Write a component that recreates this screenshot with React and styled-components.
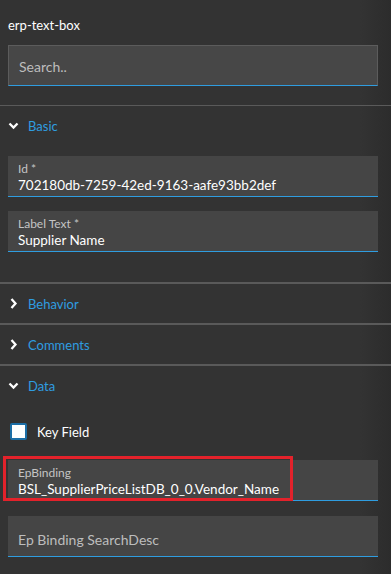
import React from "react";
import styled, { createGlobalStyle } from "styled-components";

const GlobalStyle = createGlobalStyle`
  html, body {
    margin: 0;
    padding: 0;
    background: #333333;
  }
  body {
    font-family: Lato, "Open Sans", sans-serif;
    color: #f2f2f2;
  }
`;

const Panel = styled.div`
  width: 391px;
  min-height: 574px;
  background: linear-gradient(to right, #333333 0, #333333 360px, #2c2c2c 391px);
  padding-top: 17px;
  box-sizing: border-box;
`;

const Title = styled.div`
  padding: 0 8px;
  font-size: 13px;
  line-height: 16px;
  color: #ffffff;
`;

const SearchBox = styled.div`
  margin: 12px 13px 19px 8px;
  height: 41px;
  box-sizing: border-box;
  background: #474747;
  border: 1px solid #5c5c5c;
  border-bottom: 1px solid #2f9de0;
  display: flex;
  align-items: center;
  padding: 1px 10px 0;
  font-size: 14px;
  color: #bdbdbd;
`;

const Section = styled.div`
  border-top: ${(p) => (p.$thin ? "1px" : "2px")} solid #5a5a5a;
`;

const Header = styled.div`
  height: 39px;
  display: flex;
  align-items: center;
  gap: 9px;
  padding-left: 8px;
  font-size: 13px;
  color: #2f9de0;
`;

const Body = styled.div`
  display: flex;
  flex-direction: column;
  gap: ${(p) => p.$gap || 14}px;
  padding: ${(p) => p.$pad || "11px 13px 30px 8px"};
`;

const Field = styled.div`
  position: relative;
  height: 41px;
  box-sizing: border-box;
  background: #454545;
  border-bottom: 1px solid #2f9de0;
  padding: ${(p) => (p.$empty ? "15px 10px 0" : "6px 10px 0")};
`;

const Label = styled.div`
  font-size: 12px;
  line-height: 14px;
  color: #c4c4c4;
`;

const Value = styled.div`
  font-size: 13.5px;
  line-height: 18px;
  color: #ffffff;
  white-space: nowrap;
`;

const Placeholder = styled.div`
  font-size: 14px;
  line-height: 18px;
  color: #bdbdbd;
`;

const Highlight = styled.div`
  position: absolute;
  left: -5px;
  top: -4px;
  width: 290px;
  height: 45px;
  box-sizing: border-box;
  border: 3px solid #e3222b;
  pointer-events: none;
`;

const CheckRow = styled.label`
  display: flex;
  align-items: center;
  gap: 10px;
  padding-left: 2px;
  font-size: 13px;
  color: #ffffff;
  margin: 2px 0 5px;
`;

const Box = styled.span`
  width: 17px;
  height: 17px;
  box-sizing: border-box;
  background: #ffffff;
  border: 2px solid #1c6ea6;
  border-radius: 2px;
`;

const Chevron = ({ open }) => (
  <svg width="11" height="11" viewBox="0 0 11 11">
    {open ? (
      <polyline points="1.5,3.5 5.5,7.5 9.5,3.5" fill="none" stroke="#ffffff" strokeWidth="2.3" />
    ) : (
      <polyline points="3.5,1 7.5,5.5 3.5,10" fill="none" stroke="#ffffff" strokeWidth="2.3" />
    )}
  </svg>
);

const SectionHeader = ({ open, children }) => (
  <Header>
    <Chevron open={open} />
    <span>{children}</span>
  </Header>
);

export default function App() {
  return (
    <>
      <GlobalStyle />
      <Panel>
        <Title>erp-text-box</Title>
        <SearchBox>Search..</SearchBox>

        <Section $thin>
          <SectionHeader open>Basic</SectionHeader>
          <Body>
            <Field>
              <Label>Id *</Label>
              <Value>702180db-7259-42ed-9163-aafe93bb2def</Value>
            </Field>
            <Field>
              <Label>Label Text *</Label>
              <Value>Supplier Name</Value>
            </Field>
          </Body>
        </Section>

        <Section>
          <SectionHeader>Behavior</SectionHeader>
        </Section>
        <Section>
          <SectionHeader>Comments</SectionHeader>
        </Section>

        <Section>
          <SectionHeader open>Data</SectionHeader>
          <Body $gap={15} $pad="16px 13px 17px 8px">
            <CheckRow>
              <Box />
              Key Field
            </CheckRow>
            <Field>
              <Label>EpBinding</Label>
              <Value>BSL_SupplierPriceListDB_0_0.Vendor_Name</Value>
              <Highlight />
            </Field>
            <Field $empty>
              <Placeholder>Ep Binding SearchDesc</Placeholder>
            </Field>
          </Body>
        </Section>
      </Panel>
    </>
  );
}
